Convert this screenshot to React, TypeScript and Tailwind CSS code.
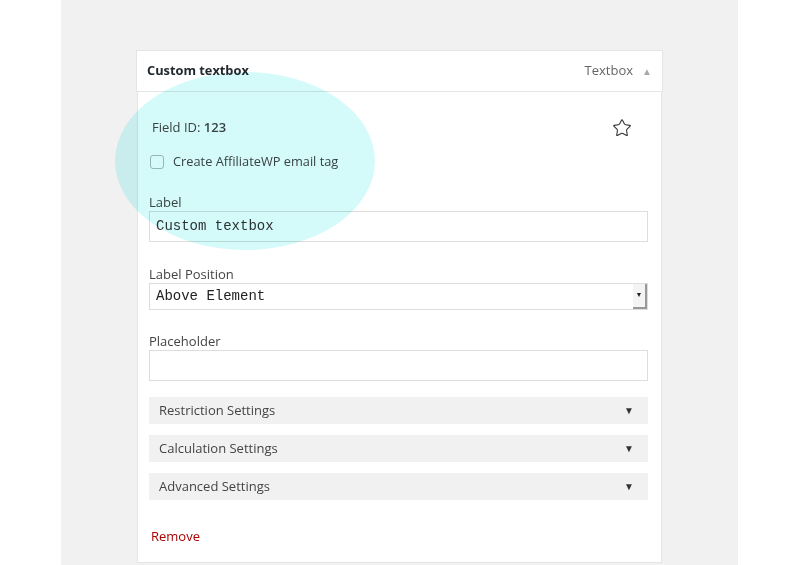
import { Star } from "lucide-react"

const Bar = ({ title }: { title: string }) => (
  <div className="flex h-[27px] items-center justify-between bg-[#f1f1f1] pl-[10px] pr-[14px] text-[13px] text-[#444]">
    <span>{title}</span>
    <span className="text-[10px] text-[#333]">▼</span>
  </div>
)

const App = () => {
  return (
    <div
      className="relative flex h-[565px] w-[800px] overflow-hidden bg-white text-[#444]"
      style={{ fontFamily: '"Open Sans", "Noto Sans", sans-serif' }}
    >
      <div className="w-[61px]"></div>
      <div className="flex-1 bg-[#f1f1f1] pl-[75px] pt-[50px]">
        <div className="w-[527px]">
          <div className="flex h-[42px] items-center justify-between border border-[#e5e5e5] bg-white pl-[10px] pr-[10px]">
            <span className="text-[12.8px] font-bold text-[#23282d]">Custom textbox</span>
            <div className="flex items-center gap-[9px]">
              <span className="text-[13px] text-[#666]">Textbox</span>
              <span className="text-[10px] text-[#aaa]">▲</span>
            </div>
          </div>
          <div className="mx-px border-x border-b border-[#e5e5e5] bg-white pb-[17px] pl-[11px] pr-[13px] pt-[26px]">
            <div className="flex h-[20px] items-center justify-between pl-[3px] pr-[16px]">
              <span className="text-[13px]">
                Field ID: <b className="font-semibold">123</b>
              </span>
              <Star size={20} strokeWidth={1.3} className="text-[#333]" />
            </div>
            <div className="mt-[14px] flex h-[20px] items-center gap-[9px] pl-px">
              <div className="h-[14px] w-[14px] rounded-[3px] border border-[#b4b9be] bg-white"></div>
              <span className="text-[12.8px]">Create AffiliateWP email tag</span>
            </div>
            <div className="mt-[21px] text-[13px] leading-[18px]">Label</div>
            <div
              className="flex h-[31px] items-center border border-[#ddd] px-[6px] text-[14px] text-[#333]"
              style={{ fontFamily: '"Liberation Mono", monospace' }}
            >
              Custom textbox
            </div>
            <div className="mt-[23px] text-[13px] leading-[18px]">Label Position</div>
            <div className="flex h-[27px] items-center justify-between border border-[#ddd] pl-[6px]">
              <span
                className="text-[14px] text-[#222]"
                style={{ fontFamily: '"Liberation Mono", monospace' }}
              >
                Above Element
              </span>
              <div className="flex h-full w-[14px] items-center justify-center border-b-2 border-r-2 border-[#999] bg-[#f4f4f4] text-[7px] text-[#222]">
                ▼
              </div>
            </div>
            <div className="mt-[22px] text-[13px] leading-[18px]">Placeholder</div>
            <div className="h-[31px] border border-[#ddd]"></div>
            <div className="mt-[16px] flex flex-col gap-[11px]">
              <Bar title="Restriction Settings" />
              <Bar title="Calculation Settings" />
              <Bar title="Advanced Settings" />
            </div>
            <div className="mt-[27px] pl-[2px] text-[13px] leading-[18px] text-[#a00]">Remove</div>
          </div>
        </div>
      </div>
      <div className="w-[62px]"></div>
      <div className="pointer-events-none absolute left-[115px] top-[72px] h-[178px] w-[260px] rounded-[50%] bg-[#d5fafa] mix-blend-multiply"></div>
    </div>
  )
}

export default App
